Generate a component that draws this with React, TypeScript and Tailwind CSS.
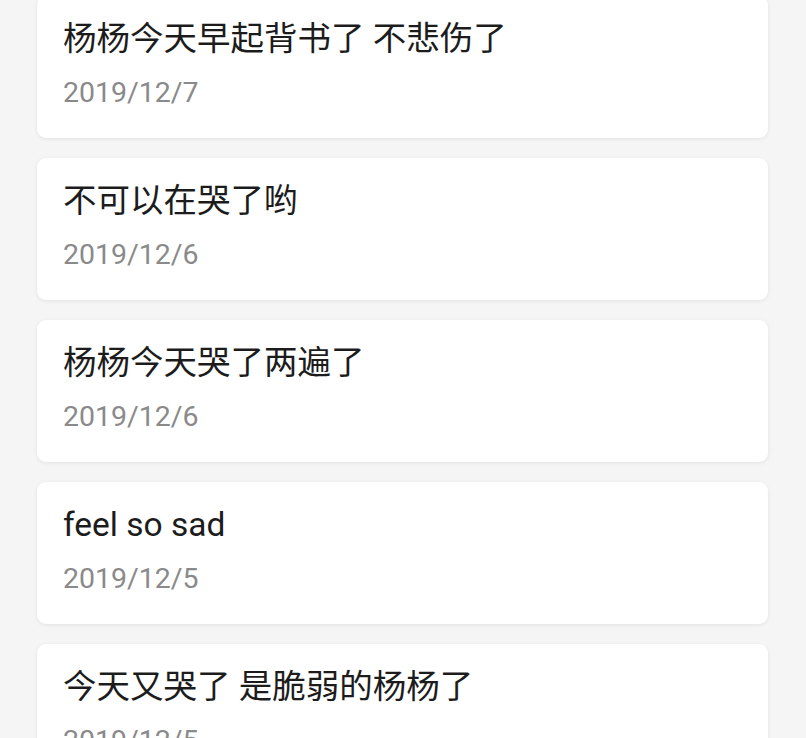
const entries = [
  { text: '杨杨今天早起背书了 不悲伤了', date: '2019/12/7' },
  { text: '不可以在哭了哟', date: '2019/12/6' },
  { text: '杨杨今天哭了两遍了', date: '2019/12/6' },
  { text: 'feel so sad', date: '2019/12/5' },
  { text: '今天又哭了 是脆弱的杨杨了', date: '2019/12/5' },
];

function DiaryCard({ text, date }: { text: string; date: string }) {
  return (
    <div className="bg-white rounded-[9px] shadow-[0_1px_4px_rgba(0,0,0,0.08)] px-[26px] pt-[22px] pb-[27px]">
      <div className="text-[33.5px] leading-[42px] text-[#1c1c1c]">{text}</div>
      <div className="mt-[15px] text-[28.5px] leading-[36px] text-[#8a8a8a]">{date}</div>
    </div>
  );
}

export default function App() {
  return (
    <div
      className="min-h-screen h-[738px] overflow-hidden bg-[#f5f5f5]"
      style={{ fontFamily: 'Roboto, "Noto Sans CJK SC", sans-serif' }}
    >
      <div className="ml-[37px] w-[731px] -mt-[4px] flex flex-col gap-[20px]">
        {entries.map((e, i) => (
          <DiaryCard key={i} text={e.text} date={e.date} />
        ))}
      </div>
    </div>
  );
}
